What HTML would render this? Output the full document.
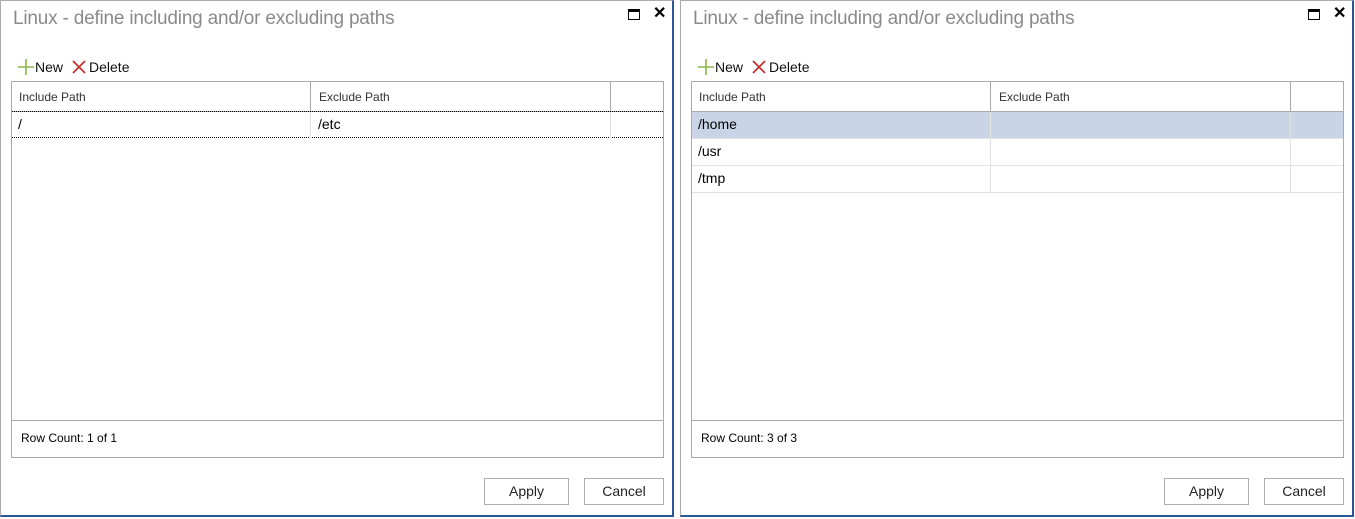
<!DOCTYPE html>
<html><head><style>
body{margin:0;width:1355px;height:519px;background:#fff;position:relative;overflow:hidden;font-family:"Segoe UI","Liberation Sans",sans-serif;}
.w{position:absolute;top:0;width:674px;height:517px;border-top:1px solid #aaa;border-left:1px solid #aaa;border-right:2px solid #2b5797;border-bottom:2px solid #2b5797;box-sizing:border-box;}
.t{position:absolute;left:12px;top:7px;font-size:19px;color:#8a8a8a;letter-spacing:-0.2px}
.mx{position:absolute;left:627px;top:8px;width:12px;height:11px;border:1.5px solid #000;border-top-width:3px;box-sizing:border-box}
.cl{position:absolute;left:652px;top:2px;font-size:16px;font-weight:bold}
.tb{position:absolute;top:57px;font-size:14px;color:#111;display:flex;align-items:center}
.g{position:absolute;left:10px;top:80px;width:653px;height:377px;border:1px solid #aaa;box-sizing:border-box}
.h{position:absolute;left:0;top:0;right:0;height:29px;border-bottom:1px solid #aaa}
.h span{position:absolute;top:8px;font-size:12px;color:#333}
.vl{position:absolute;top:0;width:1px;height:29px;background:#aaa}
.r{position:absolute;left:0;right:0;height:26px;border-bottom:1px solid #e2e2e2;font-size:14px}
.r span{position:absolute;top:4px}
.rv{position:absolute;top:0;width:1px;height:26px;background:#e2e2e2}
.f{position:absolute;left:0;right:0;top:338px;border-top:1px solid #aaa;height:36px;font-size:12px}
.f span{position:absolute;left:9px;top:10px}
.b{position:absolute;top:477px;height:27px;border:1px solid #adadad;box-sizing:border-box;font-size:14px;text-align:center;line-height:25px;color:#222}
</style></head><body>

<div class="w" style="left:0">
<div class="t">Linux - define including and/or excluding paths</div>
<div class="mx"></div><div class="cl">✕</div>
<div class="tb" style="left:16px"><svg width="18" height="18"><path d="M9 1V17M1 9H17" stroke="#8bb848" stroke-width="1.6"/></svg><span>New</span><svg width="16" height="16" style="margin-left:8px"><path d="M2 2L14 14M14 2L2 14" stroke="#c83030" stroke-width="1.8"/></svg><span style="margin-left:2px">Delete</span></div>
<div class="g">
<div class="h"><span style="left:7px">Include Path</span><span style="left:307px">Exclude Path</span><div class="vl" style="left:298px"></div><div class="vl" style="left:598px"></div></div>
<div class="r" style="top:29px;border-top:1px dotted #000;border-bottom:1px dotted #000;height:25px"><span style="left:6px">/</span><span style="left:306px">/etc</span><div class="rv" style="left:298px"></div><div class="rv" style="left:598px"></div></div>
<div class="f"><span>Row Count: 1 of 1</span></div>
</div>
<div class="b" style="left:483px;width:85px">Apply</div>
<div class="b" style="left:583px;width:80px">Cancel</div>
</div>

<div class="w" style="left:680px">
<div class="t">Linux - define including and/or excluding paths</div>
<div class="mx"></div><div class="cl">✕</div>
<div class="tb" style="left:16px"><svg width="18" height="18"><path d="M9 1V17M1 9H17" stroke="#8bb848" stroke-width="1.6"/></svg><span>New</span><svg width="16" height="16" style="margin-left:8px"><path d="M2 2L14 14M14 2L2 14" stroke="#c83030" stroke-width="1.8"/></svg><span style="margin-left:2px">Delete</span></div>
<div class="g">
<div class="h"><span style="left:7px">Include Path</span><span style="left:307px">Exclude Path</span><div class="vl" style="left:298px"></div><div class="vl" style="left:598px"></div></div>
<div class="r" style="top:30px;background:#c9d5e6"><span style="left:6px">/home</span><div class="rv" style="left:298px"></div><div class="rv" style="left:598px"></div></div>
<div class="r" style="top:57px"><span style="left:6px">/usr</span><div class="rv" style="left:298px"></div><div class="rv" style="left:598px"></div></div>
<div class="r" style="top:84px"><span style="left:6px">/tmp</span><div class="rv" style="left:298px"></div><div class="rv" style="left:598px"></div></div>
<div class="f"><span>Row Count: 3 of 3</span></div>
</div>
<div class="b" style="left:483px;width:85px">Apply</div>
<div class="b" style="left:583px;width:80px">Cancel</div>
</div>
</body></html>
